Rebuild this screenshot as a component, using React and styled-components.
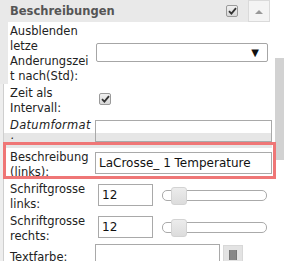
import React from "react";
import styled, { createGlobalStyle } from "styled-components";

const GlobalStyle = createGlobalStyle`
	html, body {
		margin: 0;
		padding: 0;
		background: #fff;
	}

	body {
		font-family: "DejaVu Sans", Verdana, sans-serif;
	}
`;

const Page = styled.div`
	position: relative;
	display: flex;
	width: 284px;
	height: 261px;
	overflow: hidden;
	background: #fff;
`;

const Panel = styled.div`
	flex: none;
	width: 272px;
`;

const Header = styled.div`
	display: flex;
	align-items: center;
	box-sizing: border-box;
	width: 270px;
	height: 22px;
	padding-left: 10px;
	background: #e9e9e9;
`;

const Title = styled.div`
	flex: 1;
	font-size: 11.5px;
	font-weight: bold;
	color: #555;
`;

const CheckBox = styled.span`
	display: inline-flex;
	align-items: center;
	justify-content: center;
	box-sizing: border-box;
	width: 12px;
	height: 12px;
	margin-left: ${(props) => props.$offset || "0"};
	border: 1px solid #9a9a9a;
	border-radius: 2px;
	background: linear-gradient(#f0f0f0, #d8d8d8);
`;

const CollapseButton = styled.div`
	display: flex;
	align-items: center;
	justify-content: center;
	box-sizing: border-box;
	width: 22px;
	height: 22px;
	margin-left: 10px;
	border: 1px solid #dadada;
	background: #f4f4f4;
`;

const Row = styled.div`
	display: grid;
	grid-template-columns: 84px 1fr;
	column-gap: 3px;
	align-items: center;
	border-left: ${(props) => (props.$wide ? "8px solid #e9e9e9" : "3px solid #eeeeee")};
	padding-left: ${(props) => (props.$wide ? "0" : "5px")};
	box-shadow: ${(props) => (props.$wide ? "none" : "inset 1px 0 #cfcfcf")};
	background: ${(props) =>
		props.$band
			? "linear-gradient(to bottom, transparent 17px, #e6e6e6 17px)"
			: "none"};
`;

const Label = styled.div`
	padding: 2px 0 0 2px;
	font-size: 11.5px;
	line-height: 15px;
	color: #222;
	font-style: ${(props) => (props.$italic ? "italic" : "normal")};
	letter-spacing: ${(props) => (props.$italic ? "0.3px" : "0")};
	overflow-wrap: anywhere;
`;

const Value = styled.div`
	display: flex;
	align-items: center;
	padding-bottom: 2px;
`;

const TextInput = styled.div`
	box-sizing: border-box;
	width: ${(props) => props.$width || "100%"};
	height: 22px;
	margin-left: ${(props) => props.$offset || "0"};
	padding: 0 3px;
	border: 1px solid #a9a9a9;
	font-size: 12px;
	line-height: 20px;
	color: #111;
	white-space: nowrap;
	overflow: hidden;
`;

const Select = styled.div`
	display: flex;
	align-items: center;
	justify-content: flex-end;
	box-sizing: border-box;
	width: 172px;
	height: 19px;
	margin-left: 1px;
	padding-right: 8px;
	border: 1px solid #a6a6a6;
	border-radius: 2px;
	font-size: 10px;
	color: #111;
`;

const SliderTrack = styled.div`
	position: relative;
	box-sizing: border-box;
	width: 105px;
	height: 11px;
	margin-left: 9px;
	border: 1px solid #aaa;
	border-radius: 5px;
	background: #fff;
`;

const SliderHandle = styled.div`
	position: absolute;
	top: -4px;
	left: 8px;
	box-sizing: border-box;
	width: 16px;
	height: 18px;
	border: 1px solid #d3d3d3;
	border-radius: 3px;
	background: linear-gradient(#ececec, #dcdcdc);
`;

const ColorButton = styled.div`
	display: flex;
	align-items: center;
	justify-content: center;
	box-sizing: border-box;
	width: 20px;
	height: 20px;
	margin-left: 3px;
	border: 1px solid #d8d8d8;
	background: #e3e3e3;
`;

const Scrollbar = styled.div`
	flex: none;
	display: flex;
	justify-content: flex-end;
	width: 12px;
`;

const Thumb = styled.div`
	width: 9px;
	height: 102px;
	margin-top: 58px;
	background: #d2d2d2;
`;

const Highlight = styled.div`
	position: absolute;
	top: 142px;
	left: 3px;
	box-sizing: border-box;
	width: 273px;
	height: 37px;
	border: 3px solid #ef7676;
	pointer-events: none;
`;

const Check = () => (
	<svg width="9" height="8" viewBox="0 0 9 8">
		<path d="M1 4.2 L3.4 6.6 L8 1.2" fill="none" stroke="#333" strokeWidth="1.8" />
	</svg>
);

const fields = [
	{ label: "Ausblenden letze Anderungszeit nach(Std):", kind: "select", wide: true },
	{ label: "Zeit als Intervall:", kind: "check" },
	{ label: "Datumformat:", kind: "text", italic: true, band: true },
	{ label: "Beschreibung (links):", kind: "text", value: "LaCrosse_ 1 Temperature" },
	{ label: "Schriftgrosse links:", kind: "number", value: "12" },
	{ label: "Schriftgrosse rechts:", kind: "number", value: "12" },
	{ label: "Textfarbe:", kind: "color" },
];

const renderValue = (field) => {
	switch (field.kind) {
		case "select":
			return <Select>▼</Select>;
		case "check":
			return (
				<CheckBox $offset="4px">
					<Check />
				</CheckBox>
			);
		case "number":
			return (
				<>
					<TextInput $width="55px" $offset="3px">
						{field.value}
					</TextInput>
					<SliderTrack>
						<SliderHandle />
					</SliderTrack>
				</>
			);
		case "color":
			return (
				<>
					<TextInput $width="125px" />
					<ColorButton>
						<svg width="8" height="10" viewBox="0 0 8 10">
							<rect x="0" y="0" width="8" height="10" fill="#777" />
							<path d="M2 0V10M4 0V10M6 0V10" stroke="#999" strokeWidth="1" />
						</svg>
					</ColorButton>
				</>
			);
		default:
			return <TextInput>{field.value}</TextInput>;
	}
};

const App = () => {
	return (
		<Page>
			<GlobalStyle />
			<Panel>
				<Header>
					<Title>Beschreibungen</Title>
					<CheckBox>
						<Check />
					</CheckBox>
					<CollapseButton>
						<svg width="8" height="5" viewBox="0 0 8 5">
							<path d="M0 5 L4 1 L8 5 Z" fill="#999" />
						</svg>
					</CollapseButton>
				</Header>
				{fields.map((field) => (
					<Row key={field.label} $band={field.band} $wide={field.wide}>
						<Label $italic={field.italic}>
							{field.italic ? (
								<>
									Datumformat<wbr />:
								</>
							) : (
								field.label
							)}
						</Label>
						<Value>{renderValue(field)}</Value>
					</Row>
				))}
			</Panel>
			<Scrollbar>
				<Thumb />
			</Scrollbar>
			<Highlight />
		</Page>
	);
};

export default App;
